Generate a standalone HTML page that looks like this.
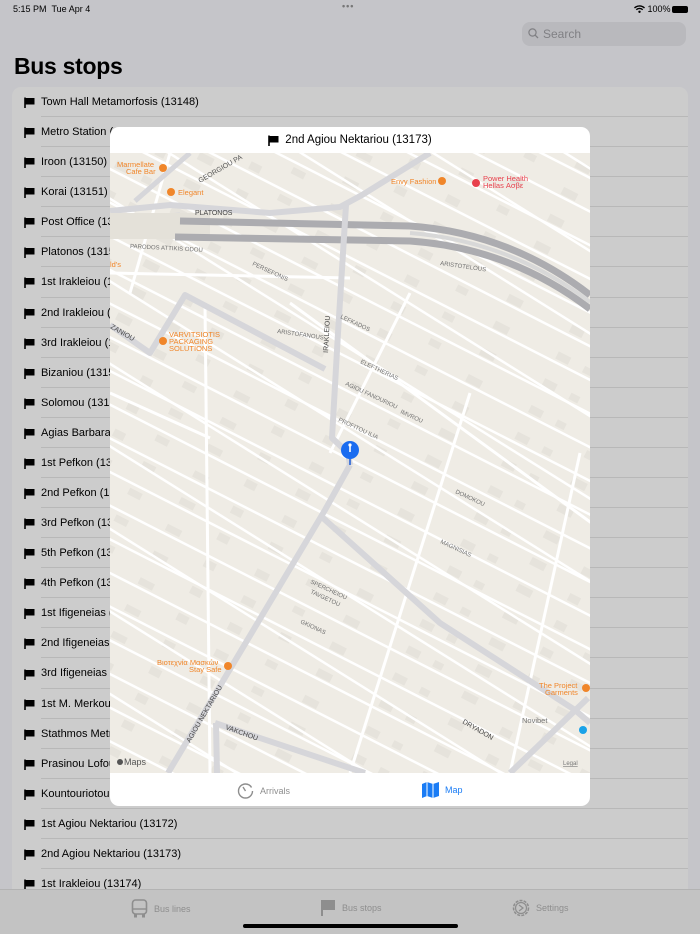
<!DOCTYPE html>
<html><head><meta charset="utf-8"><style>
*{margin:0;padding:0;box-sizing:border-box}
body{width:700px;height:934px;overflow:hidden;background:#c5c5c9;font-family:"Liberation Sans",sans-serif;position:relative;color:#000}
.st{position:absolute;top:4px;font-size:9px;font-weight:bold}
.search{position:absolute;left:522px;top:22px;width:164px;height:24px;border-radius:8px;background:#b9b9bd;color:#808084;font-size:12px;padding:5px 0 0 21px}
h1{position:absolute;left:14px;top:53px;font-size:23px;font-weight:bold;letter-spacing:-0.3px}
.card{position:absolute;left:12px;top:87px;width:676px;height:820px;background:#cccccc;border-radius:9px;overflow:hidden}
.row{height:30.08px;position:relative;font-size:11px;line-height:30px;padding-left:29px}
.row:after{content:"";position:absolute;left:29px;right:0;bottom:0;height:1px;background:#b8b8b8}
.tab{position:absolute;left:0;top:889px;width:700px;height:45px;background:#c3c3c3;border-top:1px solid #b3b3b3}
.ti{position:absolute;top:9px;font-size:9px;color:#8e8e8e;display:flex;align-items:center;gap:6px}
.home{position:absolute;left:243px;top:924px;width:215px;height:4px;border-radius:2px;background:#000}
.modal{position:absolute;left:110px;top:127px;width:480px;height:679px;background:#fff;border-radius:9px;overflow:hidden}
.mh{height:26px;font-size:11.5px;display:flex;align-items:center;justify-content:center;gap:6px}
.map{position:absolute;left:0;top:26px;width:480px;height:620px;background:#efece5;overflow:hidden}
.mt{position:absolute;top:646px;left:0;width:480px;height:33px;font-size:9px}
</style></head><body>
<div class="st" style="left:13px;font-weight:normal">5:15 PM&nbsp;&nbsp;Tue Apr 4</div>
<div class="st" style="left:342px;top:1px;color:#777;letter-spacing:1px">•••</div>
<div class="st" style="left:634px;font-weight:normal">
<svg width="11" height="8" viewBox="0 0 11 8" style="vertical-align:-1px"><path d="M0.5 3A7 7 0 0 1 10.5 3M2.3 4.8A4.5 4.5 0 0 1 8.7 4.8" stroke="#000" stroke-width="1.4" fill="none"/><circle cx="5.5" cy="6.8" r="1.2"/></svg> 100%</div>
<div style="position:absolute;left:672px;top:6px;width:16px;height:7px;background:#000;border-radius:2px"></div>
<div class="search"><svg width="11" height="11" viewBox="0 0 11 11" style="position:absolute;left:6px;top:6px"><circle cx="4.5" cy="4.5" r="3.6" stroke="#808084" stroke-width="1.2" fill="none"/><path d="M7.2 7.2L10 10" stroke="#808084" stroke-width="1.3"/></svg>Search</div>
<h1>Bus stops</h1>
<div class="card">
<div class="row">Town Hall Metamorfosis (13148)</div>
<div class="row">Metro Station (13149)</div>
<div class="row">Iroon (13150)</div>
<div class="row">Korai (13151)</div>
<div class="row">Post Office (13152)</div>
<div class="row">Platonos (13153)</div>
<div class="row">1st Irakleiou (13154)</div>
<div class="row">2nd Irakleiou (13155)</div>
<div class="row">3rd Irakleiou (13156)</div>
<div class="row">Bizaniou (13157)</div>
<div class="row">Solomou (13158)</div>
<div class="row">Agias Barbaras (13159)</div>
<div class="row">1st Pefkon (13160)</div>
<div class="row">2nd Pefkon (13161)</div>
<div class="row">3rd Pefkon (13162)</div>
<div class="row">5th Pefkon (13163)</div>
<div class="row">4th Pefkon (13164)</div>
<div class="row">1st Ifigeneias (13165)</div>
<div class="row">2nd Ifigeneias (13166)</div>
<div class="row">3rd Ifigeneias (13167)</div>
<div class="row">1st M. Merkouri (13168)</div>
<div class="row">Stathmos Metro (13169)</div>
<div class="row">Prasinou Lofou (13170)</div>
<div class="row">Kountouriotou (13171)</div>
<div class="row">1st Agiou Nektariou (13172)</div>
<div class="row">2nd Agiou Nektariou (13173)</div>
<div class="row">1st Irakleiou (13174)</div>
</div>
<div id="flags"></div>
<div class="tab">
<div class="ti" style="left:131px"><svg width="17" height="19" viewBox="0 0 17 19"><rect x="1.5" y="1" width="14" height="14" rx="3" fill="none" stroke="#8e8e8e" stroke-width="1.6"/><rect x="3" y="15" width="3" height="3.5" fill="#8e8e8e"/><rect x="11" y="15" width="3" height="3.5" fill="#8e8e8e"/><path d="M2 10H15" stroke="#8e8e8e" stroke-width="1.4"/></svg>Bus lines</div>
<div class="ti" style="left:321px"><svg width="15" height="17" viewBox="0 0 15 17"><path d="M1 1V17" stroke="#8e8e8e" stroke-width="2"/><path d="M1 1H14V11H1Z" fill="#8e8e8e"/></svg>Bus stops</div>
<div class="ti" style="left:512px"><svg width="18" height="18" viewBox="0 0 18 18"><circle cx="9" cy="9" r="7.5" fill="none" stroke="#8e8e8e" stroke-width="1.5" stroke-dasharray="3 1.2"/><circle cx="9" cy="9" r="5.5" fill="none" stroke="#8e8e8e" stroke-width="1.2"/><path d="M7 6L11 9L7 12" fill="none" stroke="#8e8e8e" stroke-width="1.2"/></svg>Settings</div>
</div>
<div class="home"></div>

<div class="modal">
<div class="mh"><svg width="11" height="11" viewBox="0 0 11 11"><path d="M1 0.5V11" stroke="#000" stroke-width="1.6"/><path d="M1 1H10.5V7.5H1Z" fill="#000"/></svg>2nd Agiou Nektariou (13173)</div>
<div class="map">
<svg width="480" height="620" viewBox="0 0 480 620">
<defs>
<pattern id="p1" width="480" height="30" patternUnits="userSpaceOnUse" patternTransform="rotate(27)"><rect x="0" y="13" width="480" height="2.5" fill="#fff"/><g fill="#e6e3dc"><rect x="10" y="3" width="14" height="8"/><rect x="40" y="4" width="10" height="7"/><rect x="80" y="18" width="16" height="8"/><rect x="130" y="3" width="12" height="8"/><rect x="170" y="19" width="14" height="7"/><rect x="220" y="4" width="16" height="7"/><rect x="270" y="18" width="12" height="8"/><rect x="320" y="3" width="14" height="8"/><rect x="370" y="19" width="12" height="7"/><rect x="420" y="4" width="16" height="8"/></g></pattern>
<pattern id="p2" width="70" height="480" patternUnits="userSpaceOnUse" patternTransform="rotate(-58)"><rect x="30" y="0" width="2.5" height="480" fill="#fff"/></pattern>
</defs>
<rect width="480" height="620" fill="url(#p1)"/>
<rect width="480" height="620" fill="url(#p2)"/>
<g fill="none" stroke="#fff" stroke-width="3">
<path d="M180 150L550 420"/><path d="M0 240L100 285"/>
<path d="M95 150L100 620"/><path d="M60 0L20 140"/><path d="M300 140L220 300"/>
<path d="M360 240L240 620"/><path d="M470 300L400 620"/><path d="M0 120L240 125"/>
</g>
<path d="M0 58L60 52L160 60L230 54L252 42L320 0" fill="none" stroke="#d6d6da" stroke-width="6"/>
<path d="M25 48L80 0" fill="none" stroke="#d6d6da" stroke-width="5"/>
<path d="M0 68L70 62" fill="none" stroke="#d6d6da" stroke-width="5"/>
<rect x="0" y="60" width="100" height="26" fill="#e4e1d9"/>
<path d="M70 68L300 73Q400 80 480 142" fill="none" stroke="#acacb0" stroke-width="7"/>
<path d="M65 84L300 88Q400 95 480 156" fill="none" stroke="#acacb0" stroke-width="7"/>
<path d="M300 80Q400 88 480 149" fill="none" stroke="#d8d8d8" stroke-width="4"/>
<g fill="none" stroke="#d6d6da" stroke-width="6" stroke-linejoin="round">
<path d="M236 52L228 180L222 285L238 300L240 312"/>
<path d="M240 312L215 357L58 620"/>
<path d="M213 365L330 470L465 557L480 570"/>
<path d="M0 172L40 200L75 142L215 216"/>
<path d="M105 570L255 620"/>
<path d="M478 545L400 620"/>
<path d="M106 570L107 620"/>
</g>
<g font-family="Liberation Sans,sans-serif" font-size="6" fill="#6f6f6f">
<text x="85" y="62" font-size="7" fill="#444">PLATONOS</text>
<text x="20" y="95" transform="rotate(3 20 95)">PARODOS ATTIKIS ODOU</text>
<text x="90" y="30" transform="rotate(-30 90 30)" font-size="7" fill="#555">GEORGIOU PA</text>
<text x="218" y="200" transform="rotate(-87 218 200)" font-size="7" fill="#444">IRAKLEIOU</text>
<text x="330" y="112" transform="rotate(8 330 112)">ARISTOTELOUS</text>
<text x="142" y="112" transform="rotate(25 142 112)">PERSEFONIS</text>
<text x="167" y="180" transform="rotate(8 167 180)">ARISTOFANOUS</text>
<text x="230" y="165" transform="rotate(25 230 165)">LEFKADOS</text>
<text x="250" y="210" transform="rotate(25 250 210)">ELEFTHERIAS</text>
<text x="235" y="232" transform="rotate(25 235 232)">AGIOU FANOURIOU</text>
<text x="228" y="268" transform="rotate(25 228 268)">PROFITOU ILIA</text>
<text x="0" y="175" transform="rotate(30 0 175)" font-size="7" fill="#444">ZANIOU</text>
<text x="352" y="570" transform="rotate(30 352 570)" font-size="7" fill="#444">DRYADON</text>
<text x="115" y="576" transform="rotate(20 115 576)" font-size="7" fill="#444">VAKCHOU</text>
<text x="80" y="590" transform="rotate(-60 80 590)" font-size="7" fill="#444">AGIOU NEKTARIOU</text>
<text x="200" y="430" transform="rotate(25 200 430)">SPERCHEIOU</text>
<text x="200" y="440" transform="rotate(25 200 440)">TAVGETOU</text>
<text x="190" y="470" transform="rotate(25 190 470)">GKIONAS</text>
<text x="290" y="260" transform="rotate(25 290 260)">IMVROU</text>
<text x="330" y="390" transform="rotate(25 330 390)">MAGNISIAS</text>
<text x="345" y="340" transform="rotate(25 345 340)">DOMOKOU</text>
</g>
<g font-family="Liberation Sans,sans-serif" font-size="7.5" fill="#f0862a">
<text x="7" y="14">Marmellate</text><text x="16" y="21">Cafe Bar</text><circle cx="53" cy="15" r="4"/>
<circle cx="61" cy="39" r="4"/><text x="68" y="42">Elegant</text>
<text x="281" y="31">Envy Fashion</text><circle cx="332" cy="28" r="4"/>
<text x="59" y="184">VARVITSIOTIS</text><text x="59" y="191">PACKAGING</text><text x="59" y="198">SOLUTIONS</text><circle cx="53" cy="188" r="4"/>
<text x="47" y="512">Βιοτεχνία Μασκών</text><text x="79" y="519">Stay Safe</text><circle cx="118" cy="513" r="4"/>
<text x="429" y="535">The Project</text><text x="435" y="542">Garments</text><circle cx="476" cy="535" r="4"/>
<text x="0" y="114">ld's</text>
<text x="373" y="28" fill="#e8414d">Power Health</text><text x="373" y="35" fill="#e8414d">Hellas Ασβε</text><circle cx="366" cy="30" r="4" fill="#e8414d"/>
<text x="412" y="570" fill="#777">Novibet</text>
</g>
<circle cx="473" cy="577" r="4" fill="#1aa2e8"/>
<text x="453" y="612" font-family="Liberation Sans,sans-serif" font-size="6" fill="#777" text-decoration="underline">Legal</text>
<text x="14" y="612" font-family="Liberation Sans,sans-serif" font-size="9" fill="#555">Maps</text>
<circle cx="10" cy="609" r="3" fill="#555"/>
<path d="M240 300L240 312" stroke="#1a5bd8" stroke-width="1.5"/>
<circle cx="240" cy="297" r="9" fill="#1a6cf0"/>
<rect x="239.2" y="292" width="1.6" height="7" fill="#fff"/><circle cx="240" cy="292" r="1.6" fill="#fff"/>
</svg>
</div>
<div class="mt">
<div style="position:absolute;left:127px;top:9px;display:flex;align-items:center;gap:6px;color:#8e8e8e"><svg width="17" height="17" viewBox="0 0 17 17"><circle cx="8.5" cy="9" r="7" fill="none" stroke="#8e8e8e" stroke-width="1.4" stroke-dasharray="40 4"/><path d="M8.5 9L6 5" stroke="#8e8e8e" stroke-width="1.4"/></svg>Arrivals</div>
<div style="position:absolute;left:312px;top:9px;display:flex;align-items:center;gap:6px;color:#1a7cf5"><svg width="17" height="16" viewBox="0 0 17 16"><path d="M0 2L5 0L11 2L17 0V14L11 16L5 14L0 16Z" fill="#1a7cf5"/><path d="M5 0V14M11 2V16" stroke="#fff" stroke-width="1"/></svg>Map</div>
</div>
</div>
<script>
var f=document.getElementById('flags'),h='';
for(var i=0;i<27;i++){h+='<svg width="11" height="11" viewBox="0 0 11 11" style="position:absolute;left:24px;top:'+(97+i*30.08)+'px"><path d="M1 0.5V11" stroke="#000" stroke-width="1.6"/><path d="M1 1H10.5V7.5H1Z" fill="#000"/></svg>';}
f.innerHTML=h;
</script>
</body></html>
